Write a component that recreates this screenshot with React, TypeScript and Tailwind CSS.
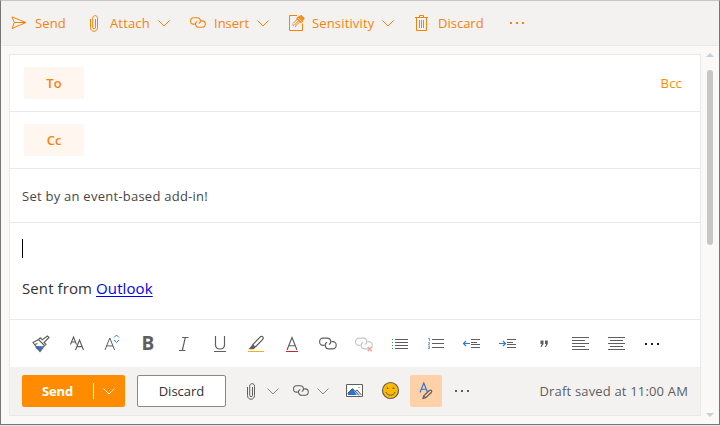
import type { ReactNode } from "react";

type P = { className?: string };
type SvgProps = { w: number; h: number; x?: number; y?: number; children: ReactNode; className?: string };

function Svg({ w, h, x = 0, y = 0, children, className = "" }: SvgProps) {
  return (
    <svg width={w} height={h} viewBox={`${-x} ${-y} ${w} ${h}`} fill="none" stroke="currentColor" strokeWidth="1" className={`block shrink-0 overflow-visible ${className}`}>
      {children}
    </svg>
  );
}

const Chevron = ({ className }: P) => (
  <Svg w={12} h={8} y={1} className={className}><path d="M.5.5 6 6 11.5.5" /></Svg>
);
const SendIcon = () => (
  <Svg w={16} h={14}><path d="M1 .9 15 6.500 1 12.500 3.300 6.500ZM3.300 6.500H15" /></Svg>
);
const Clip = () => (
  <Svg w={8} h={18} y={1}><path d="M5.500 4v8.300a1.400 1.400 0 0 1-2.800 0V3.200C2.700-.2 7.500-.2 7.500 3.200v9.300c0 5-7 5-7 0V4" /></Svg>
);
const LinkIcon = ({ broken = false, small = false }: { broken?: boolean; small?: boolean }) => (
  <svg width={small ? 16 : 18} height={small ? 14 : 16} viewBox="0 0 18 15" preserveAspectRatio="none" fill="none" stroke="currentColor" className="block shrink-0 overflow-visible">
    <g strokeWidth="1.15">
      <path d="M5.500 8.700H4A3.400 3.400 0 0 1 4 1.900h4.300c3.800 0 4.700 4.800 1.600 6.100" />
      <path d="M12.500 5.200h1.300a3.400 3.400 0 0 1 0 6.800H9.700C5.900 12 5 7.200 8.100 5.900" />
    </g>
    {broken && <path d="m12.800 10.300 4 4m0-4-4 4" stroke="#f0a79c" strokeWidth="1.600" />}
  </svg>
);
const Sensitivity = () => (
  <Svg w={16} h={18} y={1}>
    <path d="M8 .5H.5v15h13V8.500" />
    <path d="m4 8.500 4.500-4.500 2.500 2.500L6.500 11M5.500 10 9.500 6M3.800 9.200l.8 2M6 12l1.200-.8" />
    <path d="m8 3.500 1.500-1.500 4 4L12 7.500ZM10 2.500l2-2 3 3-2 2M11 1.500l3 3" strokeWidth="1.200" />
  </Svg>
);
const Trash = () => (
  <Svg w={13} h={18} y={1}><path d="M0 2.500h13M4.500 2.500v-2h4v2M1.500 2.500v13h10v-13M4.500 5v8M6.500 5v8M8.500 5v8" /></Svg>
);
const Dots = ({ className = "" }: P) => (
  <Svg w={16} h={2} className={className}><path d="M1 1h2M7 1h2M13 1h2" strokeWidth="2" /></Svg>
);

const Painter = () => (
  <Svg w={18} h={18} x={1}>
    <path d="m4 11 7.500.3-3.500 5-4.500-3.300Z" fill="#2b73d2" stroke="none" />
    <path d="m1 7.500 5.500-3 6 6L8 16.500Zm5.500-3 1.800-1.700 1.900 1.900L15.500 1l1.500 1.500-5 5 2 1.700-1.500 1.500M3 9.500l2.500-1" strokeWidth="1.150" />
  </Svg>
);
const LetterA = ({ size, x, y, light = false }: { size: number; x: number; y: number; light?: boolean }) => (
  <path d={`M${x} ${y}l${size * 0.4} ${-size}l${size * 0.4} ${size}M${x + size * 0.13} ${y - size * 0.34}h${size * 0.54}`} strokeWidth={light ? 1 : 1.15} />
);
const FontFace = () => (
  <Svg w={16} h={16} x={1}><LetterA size={7.500} x={1.500} y={8.500} /><LetterA size={10} x={6.500} y={14} /></Svg>
);
const FontSize = () => (
  <Svg w={18} h={18} x={0.500}><LetterA size={12} x={1.500} y={15} light /><path d="m10.500 2.500 2.500-2.500 2.500 2.500M10.500 5l2.500 2.500L15.500 5" stroke="#2b7cd3" /></Svg>
);
const Highlight = () => (
  <Svg w={16} h={18}>
    <path d="M4.500 10 12 2.200c2-2 4.500.3 2.700 2.200L7.300 12M4.500 10l2.800 2" strokeWidth="1.200" />
    <path d="M4.500 9.500 7.500 12.500 5.500 14.300H.5Z" fill="currentColor" stroke="none" />
    <path d="M0 16.500h16" stroke="#f2b200" />
  </Svg>
);
const FontColor = () => (
  <Svg w={12} h={18}><LetterA size={12.500} x={1} y={15} /><path d="M0 16.500h12" stroke="#d1242a" /></Svg>
);
const Bullets = () => (
  <Svg w={16} h={12}>
    <path d="M3 1.500h13M3 4.500h13M3 7.500h13M3 10.500h13" />
    <path d="M0 1.500h1M0 4.500h1M0 7.500h1M0 10.500h1" stroke="#2b7cd3" />
  </Svg>
);
const Numbers = () => (
  <Svg w={16} h={12}>
    <path d="M4 1.500h12M4 5.500h12M4 9.500h12" />
    <path d="M0 .5h1.500V3M.2 4.500h1.300V6H.5v1h1.500M.2 8.500h1.300v2H.2M.5 9.500h1" stroke="#6b9fdf" />
  </Svg>
);
const Outdent = ({ right = false }: { right?: boolean }) => (
  <Svg w={18} h={10}>
    <path d="M8 .5h9M8 3.500h6M8 5.500h9M8 8.500h9" />
    <path d={right ? "M0 4.500h6.500M4 2 6.500 4.500 4 7" : "M7 4.500H.5M3 2 .5 4.500 3 7"} stroke="#2b7cd3" strokeWidth="1.150" />
  </Svg>
);
const Quote = () => (
  <Svg w={8} h={8}>
    <path d="M.5.5H3.500v3.500L1.500 7H.4L1.800 4H.5ZM5 .5h2.800v3.500L6 7H4.900L6.200 4H5Z" fill="currentColor" stroke="none" />
  </Svg>
);
const Align = ({ center = false }: { center?: boolean }) => (
  <Svg w={18} h={14} x={1}>
    <path d={center ? "M0 .5h17M2 3.500h13M0 6.500h17M2 9.500h13M0 12.500h17" : "M0 .5h17M0 3.500h13M0 6.500h17M0 9.500h13M0 12.500h17"} />
  </Svg>
);
const Picture = () => (
  <Svg w={18} h={14} x={1}>
    <path d="M.5.5h16v12H.5Z" fill="#fff" />
    <path d="M2 11V9l4.500-4.500L11 11Z" fill="#2b73d2" stroke="none" />
    <path d="m9 8 2.500-2 4 5H11Z" fill="#c3d9f1" stroke="none" />
    <path d="m1.500 9.500 5-5 6.500 7M9 7.500l2-1.500 4.500 5" />
    <path d="M13 3v1" />
  </Svg>
);
const Smile = () => (
  <Svg w={18} h={18} x={0.500} y={-0.500}>
    <circle cx="9" cy="9" r="8" fill="#ffb900" strokeWidth="1.200" />
    <path d="M4.500 10.500c1.500 4.300 7.500 4.300 9 0" />
    <path d="M5.200 6.700h1.600M11.200 6.700h1.600" strokeWidth="1.600" />
  </Svg>
);
const Formatting = () => (
  <Svg w={14} h={18}>
    <g stroke="#2b73d2"><LetterA size={9.500} x={1} y={10.500} /></g>
    <path d="m4 16.500.7-2.700 5.600-5.300c1.600-1.200 3.300.6 2 2L6.700 15.800ZM4.700 13.800l2 2" strokeWidth="1.200" />
  </Svg>
);

const Cell = ({ children }: { children: ReactNode }) => (
  <button className="flex h-9 w-9 shrink-0 items-center justify-center">{children}</button>
);

function Toolbar() {
  return (
    <header className="flex h-[45px] shrink-0 items-center border-b border-[#e9e9e9] bg-[#f3f2f1] pl-[10px] text-[#f5830b]">
      <button className="flex w-[79px] items-center gap-2"><SendIcon /><span className="tracking-[0.1px]">Send</span></button>
      <button className="flex w-[100px] items-center"><Clip /><span className="ml-3 w-[48px] text-left tracking-[0.15px]">Attach</span><Chevron /></button>
      <button className="flex w-[99px] items-center"><LinkIcon small /><span className="ml-2 w-[43px] text-left">Insert</span><Chevron /></button>
      <button className="flex w-[126px] items-center"><Sensitivity /><span className="ml-[7px] w-[70px] text-left tracking-[0.15px]">Sensitivity</span><Chevron /></button>
      <button className="flex w-[94px] items-center"><Trash /><span className="ml-[10px]">Discard</span></button>
      <button><Dots /></button>
    </header>
  );
}

function Recipient({ label, children }: { label: string; children?: ReactNode }) {
  return (
    <div className="flex h-[57px] shrink-0 items-center justify-between border-b border-[#e9e9e9] pl-[14px] pr-[18px] text-[#ff8c00]">
      <button className="h-8 w-[60px] rounded-[2px] bg-[#fff6f0] text-center font-semibold text-[#f5830b]">{label}</button>
      {children}
    </div>
  );
}

function FormatBar() {
  return (
    <div className="flex h-[47px] shrink-0 items-start pl-3 pt-[6px] text-[#605e5c]">
      <Cell><Painter /></Cell>
      <Cell><FontFace /></Cell>
      <Cell><FontSize /></Cell>
      <Cell><span className="pb-px text-[19px] font-bold leading-none">B</span></Cell>
      <Cell><Svg w={12} h={16}><path d="M4 1.500h6.500M1 14.500h6.500M7.300 1.500l-3 13" strokeWidth="1.150" /></Svg></Cell>
      <Cell><Svg w={12} h={16}><path d="M1.500 0v8.500c0 6 9 6 9 0V0" strokeWidth="1.150" /><path d="M0 15.500h12" /></Svg></Cell>
      <Cell><Highlight /></Cell>
      <Cell><FontColor /></Cell>
      <Cell><LinkIcon /></Cell>
      <Cell><span className="text-[#c8c6c4]"><LinkIcon broken /></span></Cell>
      <Cell><Bullets /></Cell>
      <Cell><Numbers /></Cell>
      <Cell><Outdent /></Cell>
      <Cell><Outdent right /></Cell>
      <Cell><Quote /></Cell>
      <Cell><Align /></Cell>
      <Cell><Align center /></Cell>
      <Cell><Dots className="text-[#201f1e]" /></Cell>
    </div>
  );
}

function ActionBar() {
  return (
    <footer className="flex h-12 shrink-0 items-center bg-[#f3f2f1] pl-3 pr-3 text-[#605e5c]">
      <div className="flex h-8 w-[103px] items-center rounded-[2px] bg-[#ff8c00] text-white">
        <button className="w-[71px] text-center font-bold tracking-[-0.2px]">Send</button>
        <span className="h-4 w-px bg-white" />
        <button className="flex w-[30px] justify-center"><Chevron /></button>
      </div>
      <button className="ml-3 h-8 w-[89px] rounded-[2px] border border-[#8a8886] bg-white font-medium text-[#323130]">Discard</button>
      <button className="ml-[21px] flex items-center gap-3"><Clip /><Chevron className="text-[#8a8886]" /></button>
      <button className="ml-[14px] flex items-center gap-2"><LinkIcon small /><Chevron className="text-[#8a8886]" /></button>
      <div className="ml-[7px] flex">
        <Cell><Picture /></Cell>
        <Cell><Smile /></Cell>
      </div>
      <button className="ml-[2px] flex h-8 w-8 items-center justify-center rounded-[2px] bg-[#ffd1a8]"><Formatting /></button>
      <button className="ml-3"><Dots /></button>
      <span className="ml-auto whitespace-nowrap tracking-[0.17px]">Draft saved at 11:00 AM</span>
    </footer>
  );
}

export default function App() {
  return (
    <div className="flex h-[426px] w-[720px] flex-col bg-[#e5e5e5] font-['Open_Sans','Noto_Sans',sans-serif] text-[13px] leading-5">
      <div className="flex h-[425px] flex-col border border-[#767676] border-t-[#c8c6c4] bg-[#faf9f8]">
        <Toolbar />
        <div className="flex min-h-0 flex-1 pl-2 pt-2">
          <main className="flex h-[362px] w-[692px] flex-col border border-[#e9e9e9] bg-white">
            <Recipient label="To"><button className="tracking-[0.2px]">Bcc</button></Recipient>
            <Recipient label="Cc" />
            <div className="flex h-[54px] shrink-0 items-center border-b border-[#e9e9e9] pl-3 tracking-[0.25px] text-[#484644]">Set by an event-based add-in!</div>
            <section className="h-[97px] shrink-0 border-b border-[#e9e9e9] pl-3 pt-4 text-[15px] tracking-[0.1px] text-[#323130]">
              <div className="h-[19px] w-px bg-black" />
              <p className="mt-5">Sent from <a className="text-[#0000ee] underline underline-offset-2">Outlook</a></p>
            </section>
            <FormatBar />
            <ActionBar />
          </main>
          <aside className="flex flex-1 flex-col items-center pb-[7px]">
            <svg width="8" height="4" className="mt-[-1px] block"><path d="M0 4 4 0l4 4Z" fill="#c8d1d5" /></svg>
            <div className="mt-[13px] h-[175px] w-[6px] rounded-full bg-[#c6c6c4]" />
            <svg width="8" height="4" className="mt-auto block"><path d="m0 0 4 4 4-4Z" fill="#c8d1d5" /></svg>
          </aside>
        </div>
      </div>
    </div>
  );
}
